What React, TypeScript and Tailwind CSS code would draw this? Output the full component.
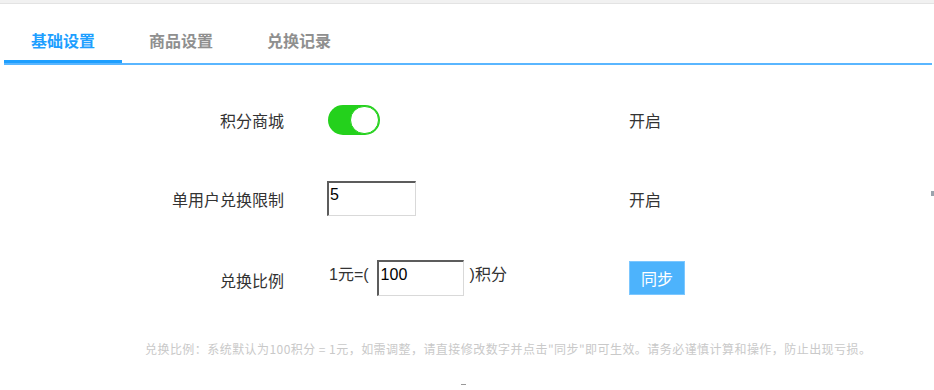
import { useState } from 'react';

const TABS = ['基础设置', '商品设置', '兑换记录'];

function Toggle({ on }: { on: boolean }) {
  return (
    <div
      className={`relative h-[30px] w-[52px] rounded-full ${on ? 'bg-[#24d11c]' : 'bg-[#dcdcdc]'}`}
    >
      <span
        className={`absolute top-[1px] h-[28px] w-[29px] rounded-full border border-[#24d11c] bg-white ${on ? 'right-[1px]' : 'left-[1px]'}`}
      />
    </div>
  );
}

export default function App() {
  const [active, setActive] = useState(0);
  const [limit, setLimit] = useState('5');
  const [ratio, setRatio] = useState('100');

  const inputCls =
    'h-[35px] border-t-2 border-l-2 border-r border-b border-t-[#5c5c5c] border-l-[#5c5c5c] border-r-[#d9d9d9] border-b-[#d9d9d9] bg-white pl-[1px] pb-[8px] pt-0 text-[16px] text-black outline-none font-["Liberation_Sans",Arial,sans-serif]';

  return (
    <div className="relative h-[390px] w-[934px] overflow-hidden bg-white font-['Noto_Sans_CJK_SC','Noto_Sans',sans-serif] text-[#333]">
      {/* top strip */}
      <div className="h-[4px] border-b border-[#e3e3e3] bg-[#f1f1f1]" />

      {/* tabs */}
      <div className="ml-[4px] mr-[2px] flex h-[61px] border-b-2 border-[#5ab6ff]">
        {TABS.map((t, i) => (
          <button
            key={t}
            onClick={() => setActive(i)}
            className={`relative w-[118px] pt-[24px] text-center text-[16px] font-semibold leading-[24px] self-start ${
              i === active ? 'text-[#1e9fff]' : 'text-[#8f8f8f]'
            }`}
          >
            {t}
            {i === active && (
              <span className="absolute left-0 top-[56px] h-[3px] w-full bg-[#1e9fff]" />
            )}
          </button>
        ))}
      </div>

      {/* form */}
      <div className="pt-[34px] text-[16px]">
        <div className="flex h-[42px] items-center">
          <div className="w-[284px] text-right">积分商城</div>
          <div className="ml-[44px] w-[301px]">
            <Toggle on />
          </div>
          <div>开启</div>
        </div>

        <div className="mt-[36px] flex h-[42px] items-center">
          <div className="w-[284px] pt-[2px] text-right">单用户兑换限制</div>
          <div className="ml-[43px] w-[302px]">
            <input
              value={limit}
              onChange={(e) => setLimit(e.target.value)}
              className={`${inputCls} w-[89px]`}
            />
          </div>
          <div className="pt-[2px]">开启</div>
        </div>

        <div className="mt-[38px] flex h-[42px] items-center">
          <div className="w-[284px] pt-[3px] text-right">兑换比例</div>
          <div className="ml-[45px] flex w-[300px] items-center">
            <span className="mb-[6px] font-['Liberation_Sans','Noto_Sans_CJK_SC',sans-serif]">1元=(</span>
            <input
              value={ratio}
              onChange={(e) => setRatio(e.target.value)}
              className={`${inputCls} ml-[8px] h-[36px] w-[87px] pl-[2px] pb-[6px]`}
            />
            <span className="mb-[6px] ml-[6px] font-['Liberation_Sans','Noto_Sans_CJK_SC',sans-serif]">)积分</span>
          </div>
          <button className="h-[34px] w-[56px] border border-[#7cc7ff] bg-[#4db3fc] text-[16px] text-white">
            同步
          </button>
        </div>

        <p className="ml-[145px] mt-[42px] text-[12px] leading-[16px] tracking-[0.45px] text-[#c9c9c9]">
          兑换比例：系统默认为100积分 = 1元，如需调整，请直接修改数字并点击"同步"即可生效。请务必谨慎计算和操作，防止出现亏损。
        </p>
      </div>

      {/* stray marks at the edges */}
      <span className="absolute left-[931px] top-[191px] h-[5px] w-[3px] bg-[#9aa3ad]" />
      <span className="absolute left-[461px] top-[384px] h-[1px] w-[5px] bg-[#999]" />
    </div>
  );
}
